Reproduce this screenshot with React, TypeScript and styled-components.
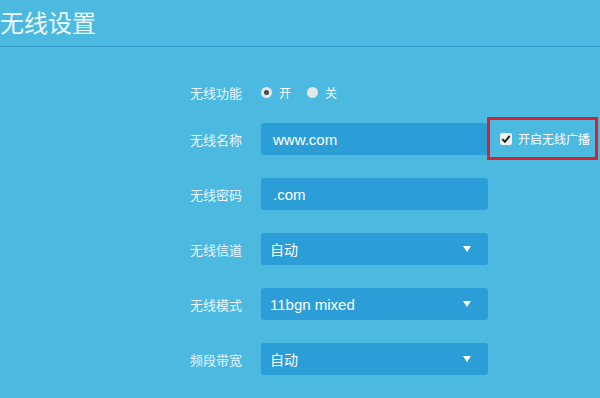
import React from 'react';
import styled, { createGlobalStyle } from 'styled-components';

const GlobalStyle = createGlobalStyle`
    html, body {
        margin: 0;
        padding: 0;
        background: #4cb9e1;
    }
    body {
        font-family: "Liberation Sans", "Noto Sans CJK SC", sans-serif;
    }
`;

const Page = styled.div`
    width: 600px;
    height: 398px;
    overflow: hidden;
    background: #4cb9e1;
    color: #ffffff;
`;

const Header = styled.div`
    height: 46px;
    border-bottom: 1px solid #2f93c6;
    display: flex;
    align-items: center;
`;

const Title = styled.h1`
    margin: 0 0 2px 0;
    font-family: "Noto Sans CJK SC", sans-serif;
    font-size: 24px;
    font-weight: 400;
    color: #f2fafd;
    line-height: 1;
`;

const Form = styled.div`
    display: flex;
    flex-direction: column;
    padding: 29px 0 0 190px;
`;

const Row = styled.div<{ $gap: number }>`
    display: flex;
    align-items: center;
    height: 32px;
    margin-bottom: ${(props) => props.$gap}px;
`;

const Label = styled.span`
    width: 71px;
    flex: none;
    font-family: "Noto Sans CJK SC", sans-serif;
    font-size: 13px;
    color: #eaf6fb;
`;

const RadioGroup = styled.div`
    display: flex;
    align-items: center;
`;

const RadioOption = styled.label`
    display: flex;
    align-items: center;
    margin-right: 16px;
    font-family: "Noto Sans CJK SC", sans-serif;
    font-size: 12px;
    color: #ffffff;
`;

const RadioDot = styled.span<{ $checked: boolean }>`
    width: 11px;
    height: 11px;
    border-radius: 50%;
    background: #e4e6e8;
    margin-right: 7px;
    display: flex;
    align-items: center;
    justify-content: center;
    &::after {
        content: '';
        width: 5px;
        height: 5px;
        border-radius: 50%;
        background: ${(props) => (props.$checked ? '#4a4d52' : 'transparent')};
    }
`;

const Field = styled.div`
    width: 227px;
    height: 32px;
    box-sizing: border-box;
    background: #2c9ed7;
    border-radius: 3px;
    display: flex;
    align-items: center;
    justify-content: space-between;
    padding: 0 17px 0 12px;
    font-size: 15px;
    color: #ffffff;
`;

const SelectField = styled(Field)`
    padding-left: 9px;
`;

const Arrow = styled.span`
    width: 0;
    height: 0;
    border-left: 4px solid transparent;
    border-right: 4px solid transparent;
    border-top: 6px solid #ffffff;
`;

const CjkText = styled.span`
    font-family: "Noto Sans CJK SC", sans-serif;
    font-size: 14px;
`;

const Highlight = styled.div`
    margin: -6px 0 -5px -1px;
    width: 111px;
    height: 43px;
    box-sizing: border-box;
    border: 3px solid #d9222e;
    display: flex;
    align-items: center;
    padding-left: 10px;
    font-family: "Noto Sans CJK SC", sans-serif;
    font-size: 12px;
    color: #ffffff;
`;

const CheckBox = styled.span`
    width: 12px;
    height: 12px;
    background: #f1f1f1;
    border-radius: 2px;
    margin-right: 6px;
    display: flex;
    align-items: center;
    justify-content: center;
`;

const selects = [
    { label: '无线信道', value: '自动', cjk: true },
    { label: '无线模式', value: '11bgn mixed', cjk: false },
    { label: '频段带宽', value: '自动', cjk: true },
];

export default function App() {
    return (
        <Page>
            <GlobalStyle />
            <Header>
                <Title>无线设置</Title>
            </Header>
            <Form>
                <Row $gap={15}>
                    <Label>无线功能</Label>
                    <RadioGroup>
                        <RadioOption>
                            <RadioDot $checked={true} />开
                        </RadioOption>
                        <RadioOption>
                            <RadioDot $checked={false} />关
                        </RadioOption>
                    </RadioGroup>
                </Row>
                <Row $gap={23}>
                    <Label>无线名称</Label>
                    <Field>www.com</Field>
                    <Highlight>
                        <CheckBox>
                            <svg width="10" height="10" viewBox="0 0 9 9">
                                <path d="M1.2 4.6 L3.5 7 L7.8 1.8" stroke="#222" strokeWidth="1.8" fill="none" />
                            </svg>
                        </CheckBox>
                        开启无线广播
                    </Highlight>
                </Row>
                <Row $gap={23}>
                    <Label>无线密码</Label>
                    <Field>.com</Field>
                </Row>
                {selects.map((item) => (
                    <Row $gap={23} key={item.label}>
                        <Label>{item.label}</Label>
                        <SelectField>
                            {item.cjk ? <CjkText>{item.value}</CjkText> : <span>{item.value}</span>}
                            <Arrow />
                        </SelectField>
                    </Row>
                ))}
            </Form>
        </Page>
    );
}
